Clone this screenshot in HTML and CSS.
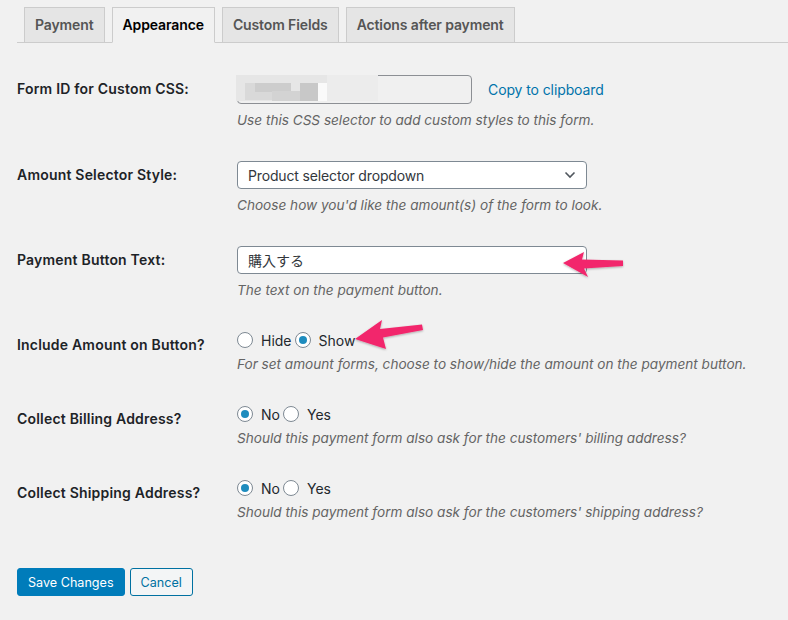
FILE: index.html
```html
<!DOCTYPE html>
<html lang="en">
<head>
<meta charset="utf-8">
<title>Appearance</title>
<link rel="stylesheet" href="styles.css">
</head>
<body>
<div class="page">
  <nav class="tabs">
    <a class="tab">Payment</a>
    <a class="tab active">Appearance</a>
    <a class="tab">Custom Fields</a>
    <a class="tab">Actions after payment</a>
  </nav>

  <div class="form">
    <div class="row">
      <div class="label">Form ID for Custom CSS:</div>
      <div class="field">
        <div class="inline">
          <div class="idfield">
            <div class="mosaic">
              <span class="m m1"></span><span class="m m2"></span><span class="m m3"></span><span class="m m4"></span><span class="m m5"></span><span class="m m6"></span><span class="m m7"></span>
            </div>
          </div>
          <a class="copy">Copy to clipboard</a>
        </div>
        <p class="desc">Use this CSS selector to add custom styles to this form.</p>
      </div>
    </div>

    <div class="row">
      <div class="label">Amount Selector Style:</div>
      <div class="field">
        <div class="select">
          <span>Product selector dropdown</span>
          <svg class="chev" width="12" height="8" viewBox="0 0 12 8"><path d="M1.5 1.5 L6 6 L10.5 1.5" fill="none" stroke="#50575e" stroke-width="1.6"/></svg>
        </div>
        <p class="desc">Choose how you'd like the amount(s) of the form to look.</p>
      </div>
    </div>

    <div class="row">
      <div class="label">Payment Button Text:</div>
      <div class="field">
        <div class="text-input">購入する</div>
        <p class="desc">The text on the payment button.</p>
      </div>
    </div>

    <div class="row">
      <div class="label">Include Amount on Button?</div>
      <div class="field">
        <div class="radios">
          <span class="opt"><span class="radio"></span>Hide</span>
          <span class="opt"><span class="radio checked"></span>Show</span>
        </div>
        <p class="desc tight">For set amount forms, choose to show/hide the amount on the payment button.</p>
      </div>
    </div>

    <div class="row">
      <div class="label">Collect Billing Address?</div>
      <div class="field">
        <div class="radios">
          <span class="opt"><span class="radio checked"></span>No</span>
          <span class="opt"><span class="radio"></span>Yes</span>
        </div>
        <p class="desc tight">Should this payment form also ask for the customers' billing address?</p>
      </div>
    </div>

    <div class="row">
      <div class="label">Collect Shipping Address?</div>
      <div class="field">
        <div class="radios">
          <span class="opt"><span class="radio checked"></span>No</span>
          <span class="opt"><span class="radio"></span>Yes</span>
        </div>
        <p class="desc tight">Should this payment form also ask for the customers' shipping address?</p>
      </div>
    </div>
  </div>

  <div class="buttons">
    <button class="btn primary">Save Changes</button>
    <button class="btn secondary">Cancel</button>
  </div>

  <svg class="arrows" width="788" height="620" viewBox="0 0 788 620">
    <defs>
      <filter id="sh" x="-20%" y="-20%" width="140%" height="160%">
        <feDropShadow dx="0" dy="1" stdDeviation="0.8" flood-color="#000" flood-opacity="0.3"/>
      </filter>
    </defs>
    <polygon filter="url(#sh)" fill="#f2286c" points="563,263 584,252 582,259.5 623,260.5 623,266 584,268.5 588,277"/>
    <polygon filter="url(#sh)" fill="#f2286c" points="355,339 382,320 380,329 422,324.5 423,330 383,337.5 386,349"/>
  </svg>
</div>
</body>
</html>
```
FILE: styles.css
```css
html, body {
  margin: 0;
  padding: 0;
  background: #f1f1f1;
}
body {
  font-family: Inter, "Liberation Sans", "Noto Sans CJK JP", sans-serif;
  font-size: 14px;
  color: #23282d;
}
.page {
  position: relative;
  width: 788px;
  height: 620px;
  overflow: hidden;
  padding-left: 17px;
  box-sizing: border-box;
}
.tabs {
  display: flex;
  padding-top: 7px;
  border-bottom: 1px solid #ccc;
}
.tab {
  display: block;
  margin-left: 7px;
  margin-bottom: -1px;
  padding: 5px 10px;
  line-height: 24px;
  font-size: 14px;
  font-weight: 600;
  letter-spacing: -0.12px;
  color: #555;
  background: #e5e5e5;
  border: 1px solid #ccc;
}
.tab.active {
  background: #f1f1f1;
  color: #000;
  border-bottom-color: #f1f1f1;
}
.form {
  margin-top: 17px;
}
.row {
  display: grid;
  grid-template-columns: 220px 1fr;
}
.label {
  padding-top: 20px;
  line-height: 18px;
  font-weight: 600;
  font-size: 14px;
  letter-spacing: 0.2px;
  color: #1d2327;
}
.field {
  padding-top: 15px;
  padding-bottom: 17px;
}
.inline {
  display: flex;
  align-items: center;
}
.idfield {
  position: relative;
  width: 235px;
  height: 29px;
  box-sizing: border-box;
  border: 1px solid #8c8f94;
  border-radius: 4px;
  background: #f0f0f0;
}
.mosaic {
  position: absolute;
  left: -2px;
  top: -1px;
  width: 142px;
  height: 26px;
}
.m { position: absolute; display: block; }
.m1 { left: 0; top: 0; width: 142px; height: 26px; background: #e6e6e6; }
.m2 { left: 9px; top: 8px; width: 27px; height: 17px; background: #d9d9d9; }
.m3 { left: 19px; top: 8px; width: 36px; height: 9px; background: #cdcdcd; }
.m4 { left: 36px; top: 16px; width: 28px; height: 10px; background: #d3d3d3; }
.m5 { left: 64px; top: 8px; width: 18px; height: 18px; background: #c8c8c8; }
.m6 { left: 82px; top: 8px; width: 9px; height: 18px; background: #fafafa; }
.m7 { left: 91px; top: 0; width: 51px; height: 26px; background: #ececec; }
.copy {
  margin-left: 16px;
  color: #0073aa;
  line-height: 18px;
  letter-spacing: -0.1px;
}
.desc {
  margin: 7px 0 0;
  line-height: 18px;
  font-size: 13.6px;
  font-style: italic;
  color: #646464;
}
.desc.tight {
  margin-top: 6px;
}
.select, .text-input {
  width: 350px;
  height: 28px;
  box-sizing: border-box;
  border: 1px solid #7e8993;
  border-radius: 4px;
  background: #fff;
  padding: 0 8px 0 10px;
  display: flex;
  align-items: center;
  justify-content: space-between;
  color: #32373c;
  font-size: 14px;
  letter-spacing: -0.15px;
}
.text-input {
  font-family: "Noto Sans CJK JP", sans-serif;
  letter-spacing: 0;
}
.chev {
  margin-right: 2px;
}
.radios {
  display: flex;
  align-items: center;
  height: 18px;
  gap: 3px;
  color: #23282d;
}
.opt {
  display: flex;
  align-items: center;
}
.radio {
  width: 16px;
  height: 16px;
  box-sizing: border-box;
  border: 1px solid #7e8993;
  border-radius: 50%;
  background: #fff;
  margin-right: 8px;
  display: flex;
  align-items: center;
  justify-content: center;
}
.radio.checked::after {
  content: "";
  width: 8px;
  height: 8px;
  border-radius: 50%;
  background: #1e8cbe;
}
.buttons {
  margin-top: 30px;
  display: flex;
  gap: 5px;
}
.btn {
  height: 28px;
  padding: 0 10px;
  font-family: inherit;
  font-size: 12.6px;
  border-radius: 3px;
  box-sizing: border-box;
}
.primary {
  background: #007cba;
  border: 1px solid #007cba;
  color: #fff;
}
.secondary {
  background: #f3f5f6;
  border: 1px solid #0071a1;
  color: #0071a1;
}
.arrows {
  position: absolute;
  left: 0;
  top: 0;
  pointer-events: none;
}
```
